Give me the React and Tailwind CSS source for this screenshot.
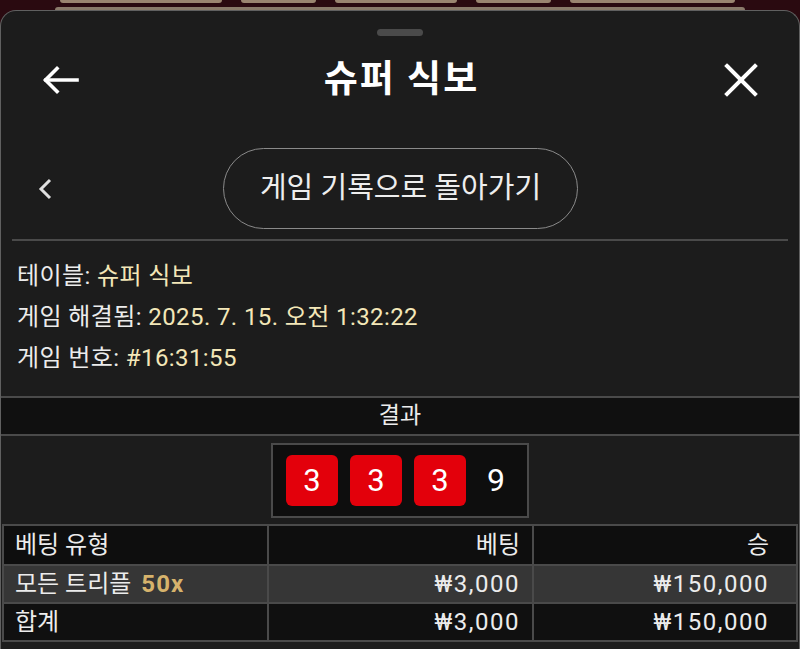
import React from 'react';

const FONT = { fontFamily: 'Roboto, "Noto Sans CJK KR", sans-serif' };

function Die({ value }) {
  return (
    <div className="flex h-[51px] w-[52px] items-center justify-center rounded-[6px] bg-[#e3000b] text-[31px] leading-none text-white">
      {value}
    </div>
  );
}

function InfoLine({ label, value }) {
  return (
    <div className="h-[41px] leading-[41px] text-[24px] tracking-[0.4px] text-[#ececec]">
      {label}: <span className="text-[#f3e7b8]">{value}</span>
    </div>
  );
}

const rows = [
  { type: '모든 트리플', mult: '50x', bet: '₩3,000', win: '₩150,000', bg: 'bg-[#363636]' },
  { type: '합계', bet: '₩3,000', win: '₩150,000', bg: 'bg-[#101010]' },
];

export default function App() {
  return (
    <div className="flex h-[649px] w-[800px] flex-col overflow-hidden bg-[#2a0a10]" style={FONT}>
      {/* what peeks out behind the sheet */}
      <div className="flex h-[3px] shrink-0 gap-[19px] pl-[60px]">
        <div className="w-[162px] rounded-b-[3px] bg-[#9a8570]" />
        <div className="w-[75px] rounded-b-[3px] bg-[#9a8570]" />
        <div className="w-[122px] rounded-b-[3px] bg-[#9a8570]" />
        <div className="w-[75px] rounded-b-[3px] bg-[#9a8570]" />
        <div className="w-[165px] rounded-b-[3px] bg-[#9a8570]" />
      </div>
      <div className="mx-[55px] mt-[4px] h-[3px] shrink-0 rounded-t-[6px] bg-[#8a7b6a]" />

      <div className="flex flex-1 flex-col rounded-t-[16px] border border-b-0 border-[#606060] bg-[#1c1c1c]">
        <div className="mx-auto mt-[18px] h-[7px] w-[46px] shrink-0 rounded-full bg-[#4a4a4a]" />

        <div className="mt-[16px] flex h-[56px] shrink-0 items-center justify-between px-[41px]">
          <svg width="37" height="30" viewBox="0 0 37 30" fill="none" stroke="white" strokeWidth="3.6" strokeLinecap="square">
            <path d="M35 15H4" />
            <path d="M15 3.5L3.5 15L15 26.5" />
          </svg>
          <div className="text-[37px] font-bold tracking-[2px] text-white">슈퍼 식보</div>
          <svg width="34" height="34" viewBox="0 0 34 34" fill="none" stroke="white" strokeWidth="4" strokeLinecap="square">
            <path d="M3 3L31 31" />
            <path d="M31 3L3 31" />
          </svg>
        </div>

        <div className="mt-[40px] flex h-[81px] shrink-0 items-center px-[36px]">
          <svg width="16" height="24" viewBox="0 0 16 24" fill="none" stroke="#e0e0e0" strokeWidth="3">
            <path d="M13 3L4 12L13 21" />
          </svg>
          <div className="ml-[170px] flex h-[81px] w-[355px] items-center justify-center rounded-full border border-[#8a8a8a] text-[29px] text-[#eeeeee]">
            게임 기록으로 돌아가기
          </div>
        </div>

        <div className="mx-[11px] mt-[10px] h-[2px] shrink-0 bg-[#4a4a4a]" />

        <div className="mt-[15px] shrink-0 pl-[16px]">
          <InfoLine label="테이블" value="슈퍼 식보" />
          <InfoLine label="게임 해결됨" value="2025. 7. 15. 오전 1:32:22" />
          <InfoLine label="게임 번호" value="#16:31:55" />
        </div>

        <div className="mt-[17px] flex h-[40px] shrink-0 items-center justify-center border-y-2 border-[#4a4a4a] bg-[#101010] text-[23px] text-[#ececec]">
          결과
        </div>

        <div className="flex h-[88px] shrink-0 items-center justify-center">
          <div className="flex h-[75px] w-[258px] items-center gap-[12px] border-2 border-[#4a4a4a] bg-[#0e0e0e] pl-[13px]">
            <Die value="3" />
            <Die value="3" />
            <Die value="3" />
            <div className="ml-[9px] text-[32px] leading-none text-white">9</div>
          </div>
        </div>

        <div className="mx-[1px] shrink-0 border-2 border-[#4a4a4a] text-[24px] text-[#ececec]">
          <div className="grid h-[38px] grid-cols-[263px_265px_1fr] bg-[#0e0e0e]">
            <div className="flex items-center pl-[11px]">베팅 유형</div>
            <div className="flex items-center justify-end border-l-2 border-[#4a4a4a] pr-[12px]">베팅</div>
            <div className="flex items-center justify-end border-l-2 border-[#4a4a4a] pr-[27px]">승</div>
          </div>
          {rows.map((r) => (
            <div key={r.type} className={`grid h-[38px] grid-cols-[263px_265px_1fr] border-t-2 border-[#4a4a4a] ${r.bg}`}>
              <div className="flex items-center pl-[11px]">
                {r.type}
                {r.mult && <span className="ml-[10px] font-bold tracking-[1px] text-[#d6b36c]">{r.mult}</span>}
              </div>
              <div className="flex items-center justify-end border-l-2 border-[#4a4a4a] pr-[12px] tracking-[1.5px]">{r.bet}</div>
              <div className="flex items-center justify-end border-l-2 border-[#4a4a4a] pr-[27px] tracking-[1.5px]">{r.win}</div>
            </div>
          ))}
        </div>
      </div>
    </div>
  );
}
